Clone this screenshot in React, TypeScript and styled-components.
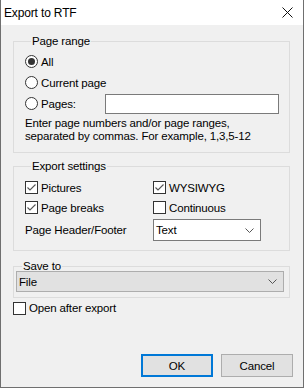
import styled, { createGlobalStyle } from 'styled-components'

const GlobalStyle = createGlobalStyle`
  html, body {
    margin: 0;
    padding: 0;
    background: #ffffff;
  }
  body {
    font-family: "Liberation Sans", Arial, sans-serif;
    font-size: 11.5px;
    letter-spacing: -0.15px;
    color: #000;
  }
`

const Window = styled.div`
  width: 304px;
  height: 388px;
  box-sizing: border-box;
  border: 1px solid #6f6f6f;
  border-top: none;
  display: flex;
  flex-direction: column;
  background: #f0f0f0;
  overflow: hidden;
`

const TitleBar = styled.div`
  height: 25px;
  flex: none;
  background: #fff;
  display: flex;
  align-items: center;
  justify-content: space-between;
  padding: 0 10px 0 3px;
`

const Title = styled.span`
  font-size: 12px;
`

const Body = styled.div`
  flex: 1;
  display: flex;
  flex-direction: column;
  padding: 9px 13px 10px 12px;
`

const Group = styled.fieldset<{ $pad?: string; $gap?: number }>`
  margin: ${p => p.$gap ?? 0}px 0 0 0;
  padding: ${p => p.$pad ?? '3px 11px 9px 11px'};
  min-width: 0;
  border: 1px solid #dcdcdc;
`

const Legend = styled.legend`
  padding: 0 1px;
  margin-left: 6px;
  line-height: 14px;
`

const OptionRow = styled.label`
  display: flex;
  align-items: center;
  height: 21px;
  gap: 3px;
`

const RadioMark = styled.span<{ $on?: boolean }>`
  width: 11px;
  height: 11px;
  border: 1px solid #333;
  border-radius: 50%;
  background: #fff;
  display: flex;
  align-items: center;
  justify-content: center;
  flex: none;
  &::after {
    content: '';
    display: ${p => (p.$on ? 'block' : 'none')};
    width: 7px;
    height: 7px;
    border-radius: 50%;
    background: #333;
  }
`

const BoxMark = styled.span`
  width: 11px;
  height: 11px;
  border: 1px solid #333;
  background: #fff;
  display: flex;
  align-items: center;
  justify-content: center;
  flex: none;
`

const PagesInput = styled.div`
  margin-left: auto;
  margin-right: -1px;
  width: 172px;
  height: 18px;
  border: 1px solid #7a7a7a;
  background: #fff;
`

const Help = styled.div`
  margin-top: 3px;
  line-height: 13px;
`

const SettingsGrid = styled.div`
  display: grid;
  grid-template-columns: 128px 1fr;
  grid-auto-rows: 20px;
  padding-top: 4px;
`

const HeaderRow = styled.div`
  grid-column: 1 / 3;
  display: grid;
  grid-template-columns: 128px 108px;
  align-items: center;
  height: 22px;
  margin-top: 2px;
`

const Combo = styled.div<{ $flat?: boolean }>`
  height: ${p => (p.$flat ? '19px' : '20px')};
  box-sizing: content-box;
  border: 1px solid ${p => (p.$flat ? '#adadad' : '#7a7a7a')};
  background: ${p => (p.$flat ? '#e1e1e1' : '#fff')};
  display: flex;
  align-items: center;
  justify-content: space-between;
  padding: 0 6px 0 2px;
`

const SaveGroupCombo = styled(Combo)`
  margin-top: -2px;
  margin-right: 2px;
`

const OpenRow = styled(OptionRow)`
  height: 20px;
`

const Footer = styled.div`
  margin-top: auto;
  display: flex;
  justify-content: flex-end;
  gap: 8px;
  margin-right: -3px;
`

const Button = styled.button<{ $default?: boolean }>`
  width: 72px;
  height: 23px;
  box-sizing: border-box;
  font-family: inherit;
  font-size: 11.5px;
  letter-spacing: -0.15px;
  color: #000;
  background: #e1e1e1;
  border: ${p => (p.$default ? '2px solid #0078d7' : '1px solid #adadad')};
  padding: 0;
`

const Chevron = () => (
  <svg width="9" height="5" viewBox="0 0 9 5">
    <polyline points="0.5,0.5 4.5,4.5 8.5,0.5" fill="none" stroke="#555" strokeWidth="1" />
  </svg>
)

const Check = () => (
  <svg width="11" height="11" viewBox="0 0 11 11">
    <polyline points="1.5,5.5 4,8 9.5,2.5" fill="none" stroke="#555" strokeWidth="1.1" />
  </svg>
)

const Radio = ({ on, label }: { on?: boolean; label: string }) => (
  <OptionRow>
    <RadioMark $on={on} />
    {label}
  </OptionRow>
)

const CheckOption = ({ on, label }: { on?: boolean; label: string }) => (
  <OptionRow>
    <BoxMark>{on && <Check />}</BoxMark>
    {label}
  </OptionRow>
)

export default function App() {
  return (
    <>
      <GlobalStyle />
      <Window>
        <TitleBar>
          <Title>Export to RTF</Title>
          <svg width="11" height="11" viewBox="0 0 11 11">
            <path d="M0.5 0.5 L10.5 10.5 M10.5 0.5 L0.5 10.5" stroke="#111" strokeWidth="1" />
          </svg>
        </TitleBar>
        <Body>
          <Group>
            <Legend>Page range</Legend>
            <Radio on label="All" />
            <Radio label="Current page" />
            <OptionRow>
              <RadioMark />
              Pages:
              <PagesInput />
            </OptionRow>
            <Help>
              Enter page numbers and/or page ranges,
              <br />
              separated by commas. For example, 1,3,5-12
            </Help>
          </Group>
          <Group $gap={6} $pad="0 11px 13px 11px">
            <Legend>Export settings</Legend>
            <SettingsGrid>
              <CheckOption on label="Pictures" />
              <CheckOption on label="WYSIWYG" />
              <CheckOption on label="Page breaks" />
              <CheckOption label="Continuous" />
              <HeaderRow>
                <span>Page Header/Footer</span>
                <Combo>
                  Text
                  <Chevron />
                </Combo>
              </HeaderRow>
            </SettingsGrid>
          </Group>
          <Group $gap={8} $pad="0 3px 5px 2px">
            <Legend>Save to</Legend>
            <SaveGroupCombo $flat>
              File
              <Chevron />
            </SaveGroupCombo>
          </Group>
          <OpenRow>
            <BoxMark />
            Open after export
          </OpenRow>
          <Footer>
            <Button $default>OK</Button>
            <Button>Cancel</Button>
          </Footer>
        </Body>
      </Window>
    </>
  )
}
